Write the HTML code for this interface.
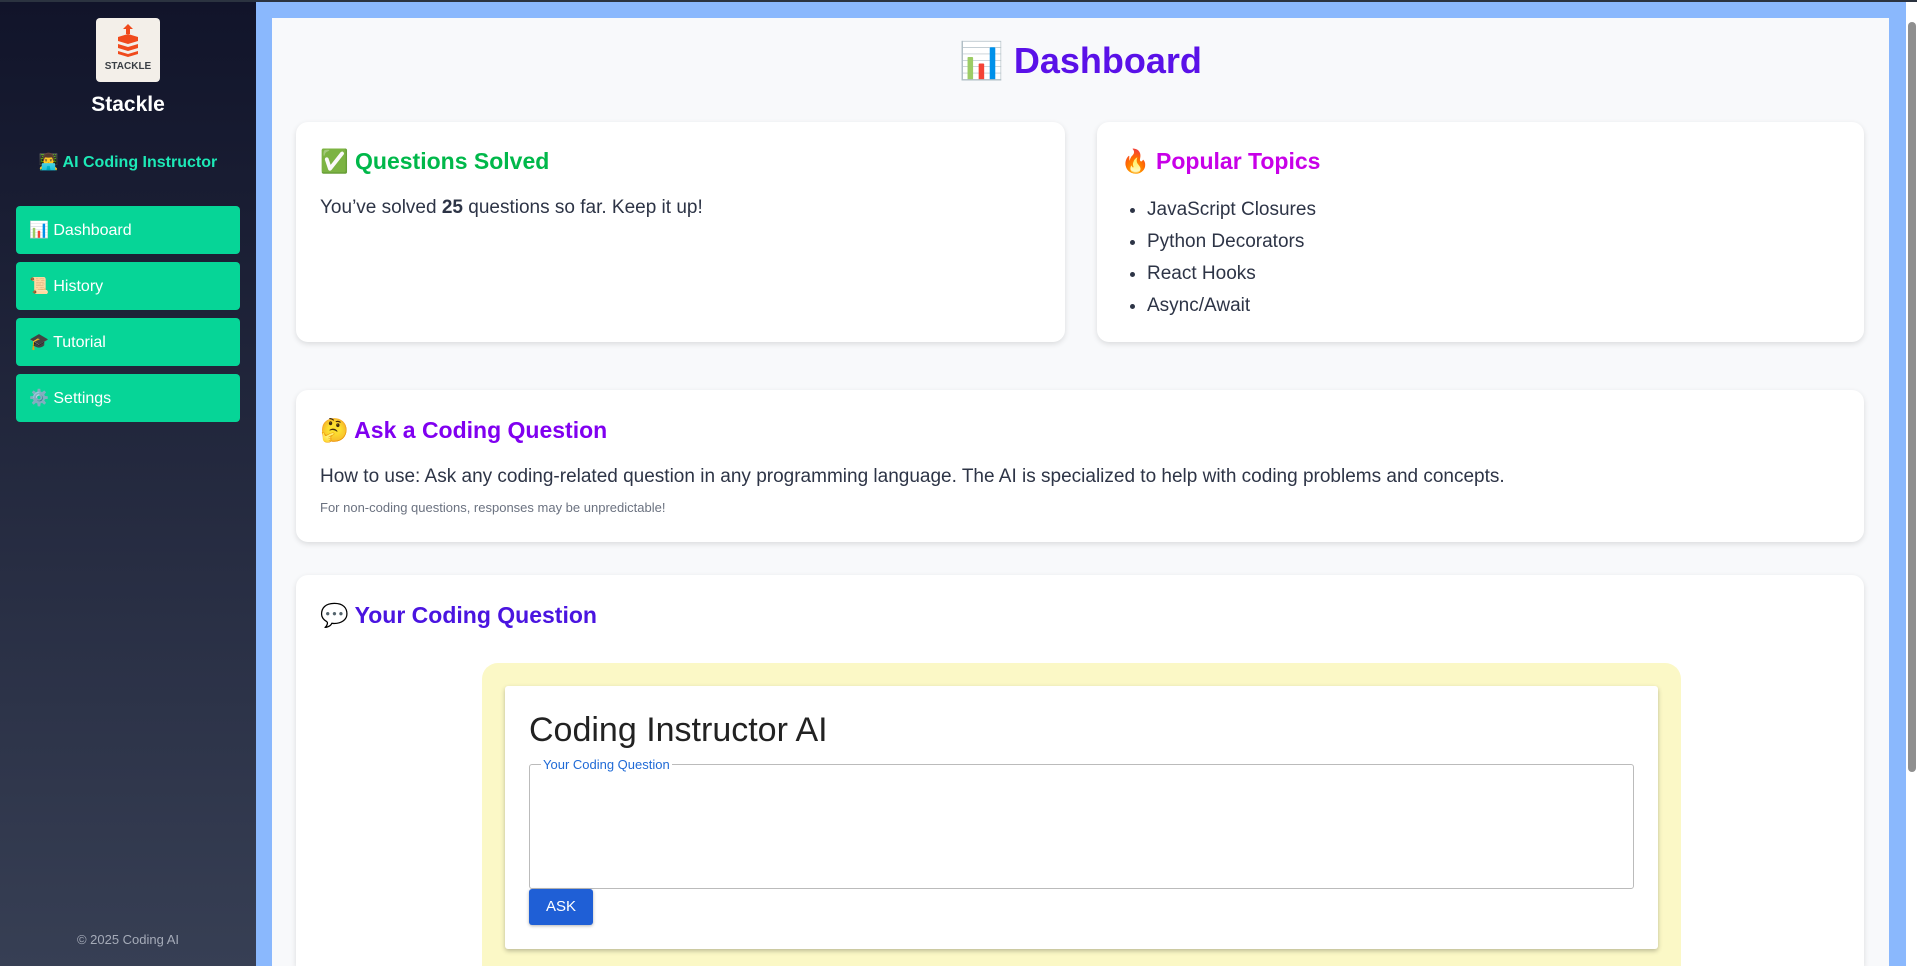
<!DOCTYPE html>
<html><head><meta charset="utf-8">
<style>
*{box-sizing:border-box;margin:0;padding:0}
html,body{width:1917px;height:966px;overflow:hidden;font-family:"Liberation Sans","Noto Sans CJK SC",sans-serif;background:#8ab8fd}
#root{position:relative;width:1917px;height:966px;overflow:hidden;background:#8ab8fd}
.topbar{position:absolute;left:0;top:0;width:1917px;height:2px;background:#2b3340;z-index:5}
.side{position:absolute;left:0;top:0;width:256px;height:966px;background:linear-gradient(#11142a,#373f54)}
.logo{position:absolute;left:96px;top:18px;width:64px;height:64px;background:#f3efe9;border-radius:4px;text-align:center}
.logo .t{position:absolute;left:0;right:0;top:43px;font-size:10px;font-weight:bold;color:#3a3f45}
.brand{position:absolute;left:0;width:256px;top:93px;text-align:center;color:#fff;font-weight:bold;font-size:21px}
.ai{position:absolute;left:0;width:256px;top:152px;text-align:center;color:#1de9b6;font-weight:bold;font-size:16px}
.btn{position:absolute;left:16px;width:224px;height:48px;background:#06d597;border-radius:4px;color:#fff;font-size:16px;line-height:50px;padding-left:13px}
.foot{position:absolute;left:0;width:256px;top:932px;text-align:center;color:#a5abb8;font-size:13px}
.panel{position:absolute;left:272px;top:18px;width:1617px;height:948px;background:#f8f9fb;overflow:hidden}
h1{position:absolute;left:0;width:1617px;top:22px;text-align:center;font-size:36px;color:#5a11e8;font-weight:bold}
.card{position:absolute;background:#fff;border-radius:12px;box-shadow:0 2px 6px rgba(0,0,0,.12)}
.card h2{position:absolute;left:24px;font-size:23px;font-weight:bold}
.p{position:absolute;left:24px;font-size:19px;color:#2d3446}
ul{position:absolute;left:50px;top:72px;font-size:19px;color:#2d3446;line-height:32px}
.yellow{position:absolute;left:210px;top:645px;width:1199px;height:303px;background:#fbf8c6;border-radius:16px 16px 0 0}
.white{position:absolute;left:233px;top:668px;width:1153px;height:263px;background:#fff;border-radius:3px;box-shadow:0 2px 5px rgba(0,0,0,.25)}
.scroll{position:absolute;left:1906px;top:2px;width:11px;height:964px;background:#fff}
.thumb{position:absolute;left:2px;top:20px;width:8px;height:750px;background:#8f8f8f;border-radius:4px}
</style></head><body>
<div id="root">
<div class="topbar"></div>
<div class="side">
 <div class="logo">
  <svg width="64" height="44" viewBox="0 0 64 44"><path d="M32 6 l-5 5 h3 v5 h4 v-5 h3z" fill="#f04a1c"/><path d="M22 19 l10 -3 l10 3 v4 l-10 3 l-10 -3z M22 26 l10 3 l10 -3 v4 l-10 3 l-10 -3z M22 33 l10 3 l10 -3 v3 l-10 3 l-10 -3z" fill="#f04a1c"/></svg>
  <div class="t">STACKLE</div>
 </div>
 <div class="brand">Stackle</div>
 <div class="ai">👨‍💻 AI Coding Instructor</div>
 <div class="btn" style="top:206px">📊 Dashboard</div>
 <div class="btn" style="top:262px">📜 History</div>
 <div class="btn" style="top:318px">🎓 Tutorial</div>
 <div class="btn" style="top:374px">⚙️ Settings</div>
 <div class="foot">© 2025 Coding AI</div>
</div>
<div class="panel">
 <h1>📊 Dashboard</h1>
 <div class="card" style="left:24px;top:104px;width:769px;height:220px">
  <h2 style="top:26px;color:#00b84a">✅ Questions Solved</h2>
  <div class="p" style="top:75px">You’ve solved <b>25</b> questions so far. Keep it up!</div>
 </div>
 <div class="card" style="left:825px;top:104px;width:767px;height:220px">
  <h2 style="top:26px;color:#c800e8">🔥 Popular Topics</h2>
  <ul><li>JavaScript Closures</li><li>Python Decorators</li><li>React Hooks</li><li>Async/Await</li></ul>
 </div>
 <div class="card" style="left:24px;top:372px;width:1568px;height:152px">
  <h2 style="top:27px;color:#8000f0">🤔 Ask a Coding Question</h2>
  <div class="p" style="top:76px">How to use: Ask any coding-related question in any programming language. The AI is specialized to help with coding problems and concepts.</div>
  <div class="p" style="top:110px;font-size:13px;color:#6b7280">For non-coding questions, responses may be unpredictable!</div>
 </div>
 <div class="card" style="left:24px;top:557px;width:1568px;height:391px;border-radius:12px 12px 0 0">
  <h2 style="top:27px;color:#4a14e0">💬 Your Coding Question</h2>
 </div>
 <div class="yellow"></div>
 <div class="white">
  <div style="position:absolute;left:24px;top:25px;font-size:34px;color:#222">Coding Instructor AI</div>
  <div style="position:absolute;left:24px;top:78px;width:1105px;height:125px;border:1px solid #bbb;border-radius:3px"></div>
  <div style="position:absolute;left:36px;top:71px;background:#fff;padding:0 2px;font-size:13px;color:#1f6ad6">Your Coding Question</div>
  <div style="position:absolute;left:24px;top:203px;width:64px;height:36px;background:#1f5fd6;border-radius:3px;color:#fff;font-size:15px;line-height:36px;text-align:center;box-shadow:0 1px 3px rgba(0,0,0,.3)">ASK</div>
 </div>
</div>
<div class="scroll"><div class="thumb"></div></div>
</div>
</body></html>
